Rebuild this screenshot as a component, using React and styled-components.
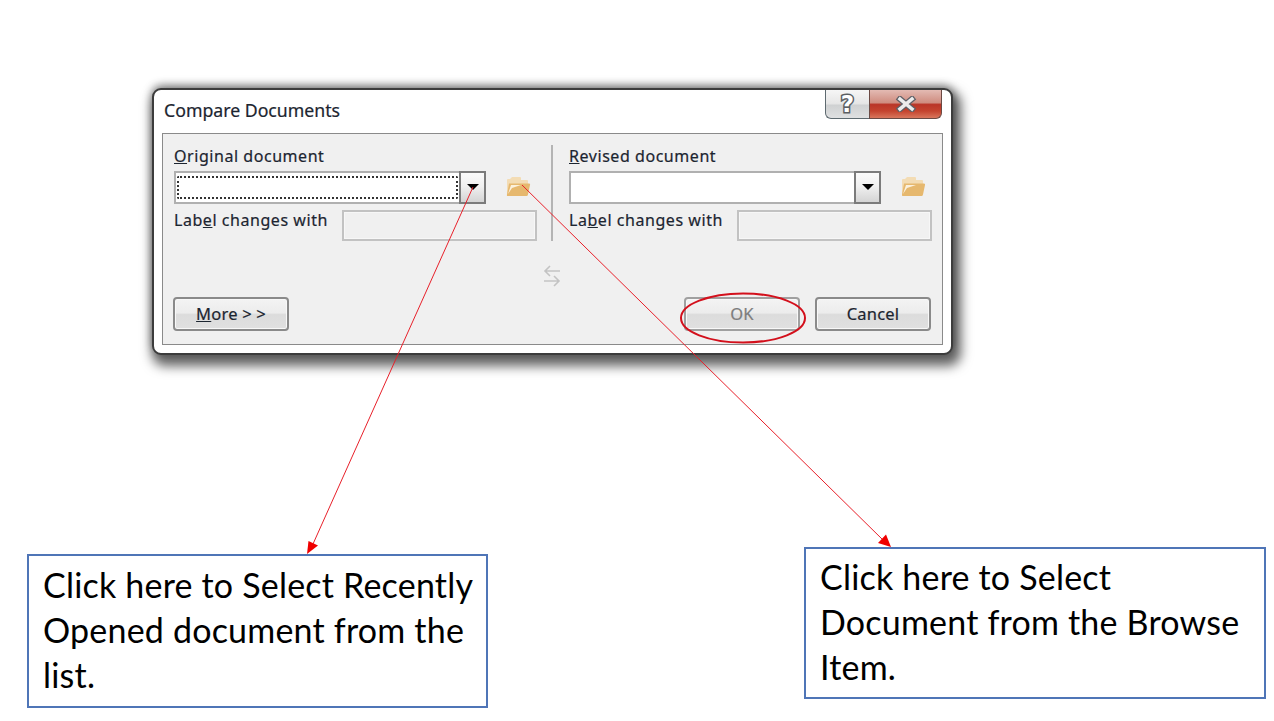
import React from "react";
import styled, { createGlobalStyle } from "styled-components";

const GlobalStyle = createGlobalStyle`
  html, body {
    margin: 0;
    padding: 0;
    background: #fff;
  }
`;

const Slide = styled.div`
  position: relative;
  width: 1274px;
  height: 721px;
  padding-top: 88px;
  box-sizing: border-box;
  overflow: hidden;
  background: #fff;
`;

const Dialog = styled.div`
  width: 801px;
  height: 267px;
  margin-left: 152px;
  padding: 0 8px 8px;
  box-sizing: border-box;
  display: flex;
  flex-direction: column;
  background: #fff;
  border: 2px solid #3c3c3c;
  border-radius: 9px;
  box-shadow: 4px 7px 12px 4px rgba(0, 0, 0, 0.62), 0 -3px 9px rgba(0, 0, 0, 0.38);
  font-family: "Noto Sans", sans-serif;
  color: #1c2530;
  -webkit-text-stroke: 0.2px;
`;

const TitleBar = styled.div`
  height: 43px;
  flex: none;
  display: flex;
  justify-content: space-between;
`;

const Title = styled.div`
  margin: 9px 0 0 2px;
  font-size: 17.7px;
  line-height: 22px;
`;

const WindowControls = styled.div`
  display: flex;
  height: 29px;
  margin-right: 1px;
`;

const HelpButton = styled.div`
  width: 44px;
  box-sizing: border-box;
  display: flex;
  align-items: center;
  justify-content: center;
  background: linear-gradient(#f6f6f6 0%, #e6e6e6 48%, #cfd1d2 55%, #dfe0e1 100%);
  border: 1px solid #5e6a70;
  border-top: none;
  border-right: none;
  border-radius: 0 0 0 6px;
`;

const HelpMark = styled.span`
  font-family: "DejaVu Sans", sans-serif;
  font-size: 23px;
  font-weight: 700;
  line-height: 24px;
  color: #fff;
  paint-order: stroke fill;
  -webkit-text-stroke: 3px #5b5f63;
`;

const CloseButton = styled.div`
  width: 73px;
  box-sizing: border-box;
  display: flex;
  align-items: center;
  justify-content: center;
  background: linear-gradient(#e3bab3 0%, #cf8d80 45%, #ba3527 52%, #c4442f 75%, #d9765c 100%);
  border: 1px solid #6b4a44;
  border-top: none;
  border-radius: 0 0 6px 0;
`;

const Panel = styled.div`
  flex: 1;
  padding: 0 10px 0 11px;
  display: flex;
  flex-direction: column;
  background: #f0f0f0;
  border: 1px solid #8a8a8a;
`;

const Columns = styled.div`
  display: flex;
  height: 107px;
`;

const DocColumn = styled.div`
  width: 363px;
  padding-top: 11px;
`;

const Divider = styled.div`
  width: 2px;
  height: 96px;
  margin: 11px 16px 0 14px;
  background: #b4b4b4;
`;

const FieldLabel = styled.div`
  font-size: 16px;
  line-height: 22px;
  letter-spacing: 0.55px;
  white-space: nowrap;
`;

const ComboRow = styled.div`
  display: flex;
  margin-top: 4px;
`;

const Combo = styled.div`
  width: 312px;
  height: 33px;
  box-sizing: border-box;
  display: flex;
  padding: ${(p) => (p.$focused ? "3px 0 3px 1px" : "0")};
  background: #fff;
  border: 2px solid #b0b0b0;
  position: relative;
`;

const FocusRing = styled.div`
  flex: 1;
  margin-right: 26px;
  border: 2px dotted #333;
  border-radius: 2px;
`;

const ComboButton = styled.div`
  position: absolute;
  top: -2px;
  right: -2px;
  bottom: -2px;
  width: 27px;
  box-sizing: border-box;
  display: flex;
  justify-content: center;
  padding-top: 11px;
  border: 2px solid #7b7b7b;
  background: linear-gradient(#fafafa 0%, #f0f0f0 45%, #d4d4d4 100%);
`;

const ComboArrow = styled.div`
  width: 0;
  height: 0;
  border-left: 6px solid transparent;
  border-right: 6px solid transparent;
  border-top: 6px solid #000;
`;

const FolderSlot = styled.div`
  margin: 5px 0 0 20px;
  width: 25px;
  height: 21px;
`;

const LabelRow = styled.div`
  display: flex;
  justify-content: space-between;
  margin-top: 5px;
`;

const ChangeInput = styled.div`
  width: 195px;
  height: 31px;
  margin-top: 1px;
  box-sizing: border-box;
  background: #f0f0f0;
  border: 2px solid #c2c2c2;
  box-shadow: inset 0 0 0 1px #f7f7f7;
`;

const SwapRow = styled.div`
  display: flex;
  justify-content: center;
  height: 22px;
  margin-top: 24px;
  padding-right: 3px;
`;

const ButtonRow = styled.div`
  display: flex;
  gap: 15px;
  margin: 10px 1px 0 -1px;
`;

const DialogButton = styled.div`
  width: 116px;
  height: 34px;
  box-sizing: border-box;
  padding-bottom: 2px;
  margin-left: ${(p) => (p.$push ? "auto" : "0")};
  display: flex;
  align-items: center;
  justify-content: center;
  font-size: 16.5px;
  letter-spacing: 0.2px;
  color: ${(p) => (p.$disabled ? "#7d7d7d" : "#1c2530")};
  background: linear-gradient(#f3f3f3 0%, #ececec 46%, #dcdcdc 52%, #e0e0e0 100%);
  border: 2px solid ${(p) => (p.$disabled ? "#a0a0a0" : "#8a8a8a")};
  border-radius: 4px;
  box-shadow: inset 0 0 0 1px #f8f8f8;
`;

const Callouts = styled.div`
  display: flex;
  justify-content: space-between;
  align-items: flex-start;
  margin: 192px 8px 0 27px;
`;

const Callout = styled.div`
  width: ${(p) => p.$width}px;
  height: ${(p) => p.$height}px;
  margin-top: ${(p) => p.$drop}px;
  padding: ${(p) => p.$textTop}px 10px 0 14px;
  box-sizing: border-box;
  border: 2px solid #4f75b7;
  background: #fff;
  font-family: Lato, "Open Sans", sans-serif;
  font-size: 34px;
  line-height: 45px;
  letter-spacing: 0.2px;
  color: #000;
`;

const Overlay = styled.svg`
  position: absolute;
  inset: 0;
  pointer-events: none;
`;

const FolderIcon = () => (
  <svg width="25" height="21" viewBox="0 0 25 21">
    <path d="M1 19V4q0-1 1-1h2l2-2h8q1 0 1 1v2h6q1 0 1 1v3H6z" fill="#f3dcb4" />
    <path d="M3 7.5h20q1.500 0 1 1.500l-2 9.500q-.3 1.500-1.500 1.500H2q-1.500 0-1-1.500z" fill="#e6b86e" />
    <path d="M2 18L5 9h10l-9 3z" fill="#fbf1dd" />
  </svg>
);

const SwapIcon = () => (
  <svg width="18" height="22" viewBox="0 0 18 22" fill="none" stroke="#c3c3c3" strokeWidth="1.600">
    <path d="M17 6H2M7 1L2 6l5 5" />
    <path d="M1 16h15M11 11l5 5-5 5" />
  </svg>
);

const CloseIcon = () => (
  <svg width="24" height="16" viewBox="0 0 24 16" fill="none" strokeLinecap="square">
    <path d="M6 3l12 10M18 3L6 13" stroke="#5d5f66" strokeWidth="6" />
    <path d="M6 3l12 10M18 3L6 13" stroke="#ececec" strokeWidth="3.500" />
  </svg>
);

const DocumentFields = ({ mnemonic, rest, focused, labelHead, labelKey, labelTail }) => (
  <DocColumn>
    <FieldLabel>
      <u>{mnemonic}</u>
      {rest}
    </FieldLabel>
    <ComboRow>
      <Combo $focused={focused}>
        {focused && <FocusRing />}
        <ComboButton>
          <ComboArrow />
        </ComboButton>
      </Combo>
      <FolderSlot>
        <FolderIcon />
      </FolderSlot>
    </ComboRow>
    <LabelRow>
      <FieldLabel>
        {labelHead}
        <u>{labelKey}</u>
        {labelTail}
      </FieldLabel>
      <ChangeInput />
    </LabelRow>
  </DocColumn>
);

const App = () => {
  return (
    <Slide>
      <GlobalStyle />
      <Dialog>
        <TitleBar>
          <Title>Compare Documents</Title>
          <WindowControls>
            <HelpButton>
              <HelpMark>?</HelpMark>
            </HelpButton>
            <CloseButton>
              <CloseIcon />
            </CloseButton>
          </WindowControls>
        </TitleBar>
        <Panel>
          <Columns>
            <DocumentFields
              focused
              mnemonic="O"
              rest="riginal document"
              labelHead="Lab"
              labelKey="e"
              labelTail="l changes with"
            />
            <Divider />
            <DocumentFields
              mnemonic="R"
              rest="evised document"
              labelHead="La"
              labelKey="b"
              labelTail="el changes with"
            />
          </Columns>
          <SwapRow>
            <SwapIcon />
          </SwapRow>
          <ButtonRow>
            <DialogButton>
              <span>
                <u>M</u>ore &gt; &gt;
              </span>
            </DialogButton>
            <DialogButton $push $disabled>
              OK
            </DialogButton>
            <DialogButton>Cancel</DialogButton>
          </ButtonRow>
        </Panel>
      </Dialog>
      <Callouts>
        <Callout $width={461} $height={154} $drop={7} $textTop={6}>
          Click here to Select Recently Opened document from the list.
        </Callout>
        <Callout $width={462} $height={152} $drop={0} $textTop={5}>
          Click here to Select Document from the Browse Item.
        </Callout>
      </Callouts>
      <Overlay width="1274" height="721" viewBox="0 0 1274 721">
        <ellipse cx="743" cy="318" rx="62" ry="24.500" fill="none" stroke="#d3101c" strokeWidth="2" />
        <path d="M473 187L313 544" stroke="#e8202a" strokeWidth="1" fill="none" />
        <path d="M307 554L308.500 541L318 545.500z" fill="#f00000" />
        <path d="M522 185L883 540" stroke="#e8202a" strokeWidth="1" fill="none" />
        <path d="M891 547L878 543L886 534.500z" fill="#f00000" />
      </Overlay>
    </Slide>
  );
};

export default App;
